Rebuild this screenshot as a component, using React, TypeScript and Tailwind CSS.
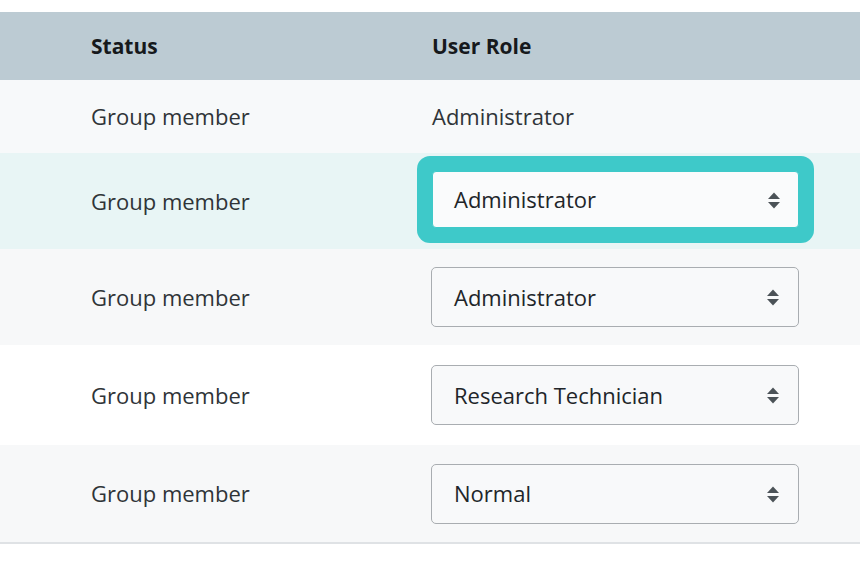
import React from "react";

const Arrows = () => (
  <svg width="14" height="20" viewBox="0 0 14 20" className="shrink-0">
    <path d="M7 2.5 L13 9 L1 9 Z" fill="#4b5257" />
    <path d="M7 18.5 L13 12 L1 12 Z" fill="#4b5257" />
  </svg>
);

const Select = ({ value, focused }: { value: string; focused?: boolean }) => (
  <div
    className={
      focused
        ? "-mt-[3px] flex h-[57px] w-[367px] items-center justify-between rounded-[4px] border border-[#3ec9c9] bg-[#fafbfc] pl-[21px] pr-[17px] shadow-[0_0_0_15px_#3ec9c9]"
        : "flex h-[60px] w-[368px] items-center justify-between rounded-[5px] border border-[#a9adb1] bg-[#f8f9fa] pl-[22px] pr-[18px]"
    }
  >
    <span className="text-[#212529]">{value}</span>
    <Arrows />
  </div>
);

const rows: { role: string; select: boolean; focused?: boolean; bg: string; h: string }[] = [
  { role: "Administrator", select: false, bg: "bg-[#f7f9fa]", h: "h-[73px]" },
  { role: "Administrator", select: true, focused: true, bg: "bg-[#e8f5f5]", h: "h-[96px]" },
  { role: "Administrator", select: true, bg: "bg-[#f7f8f9]", h: "h-[96px]" },
  { role: "Research Technician", select: true, bg: "bg-white", h: "h-[100px]" },
  { role: "Normal", select: true, bg: "bg-[#f7f8f9]", h: "h-[97px]" },
];

export default function App() {
  return (
    <div
      className="h-[565px] w-[860px] overflow-hidden bg-white pt-[12px] text-[22px] text-[#2f3438]"
      style={{ fontFamily: '"Open Sans", "Noto Sans", sans-serif' }}
    >
      <div className="grid h-[68px] grid-cols-[432px_1fr] items-center bg-[#bccbd3] pt-[2px] text-[21px] font-bold text-[#16191c]">
        <div className="pl-[91px]">Status</div>
        <div>User Role</div>
      </div>
      {rows.map((r, i) => (
        <div key={i} className={`grid grid-cols-[432px_1fr] items-center ${r.bg} ${r.h}`}>
          <div className="pl-[91px]">Group member</div>
          <div className={r.focused ? "" : "-ml-[1px]"}>
            {r.select ? <Select value={r.role} focused={r.focused} /> : <span className="pl-[1px]">{r.role}</span>}
          </div>
        </div>
      ))}
      <div className="h-[2px] bg-[#dfe2e5]" />
    </div>
  );
}
